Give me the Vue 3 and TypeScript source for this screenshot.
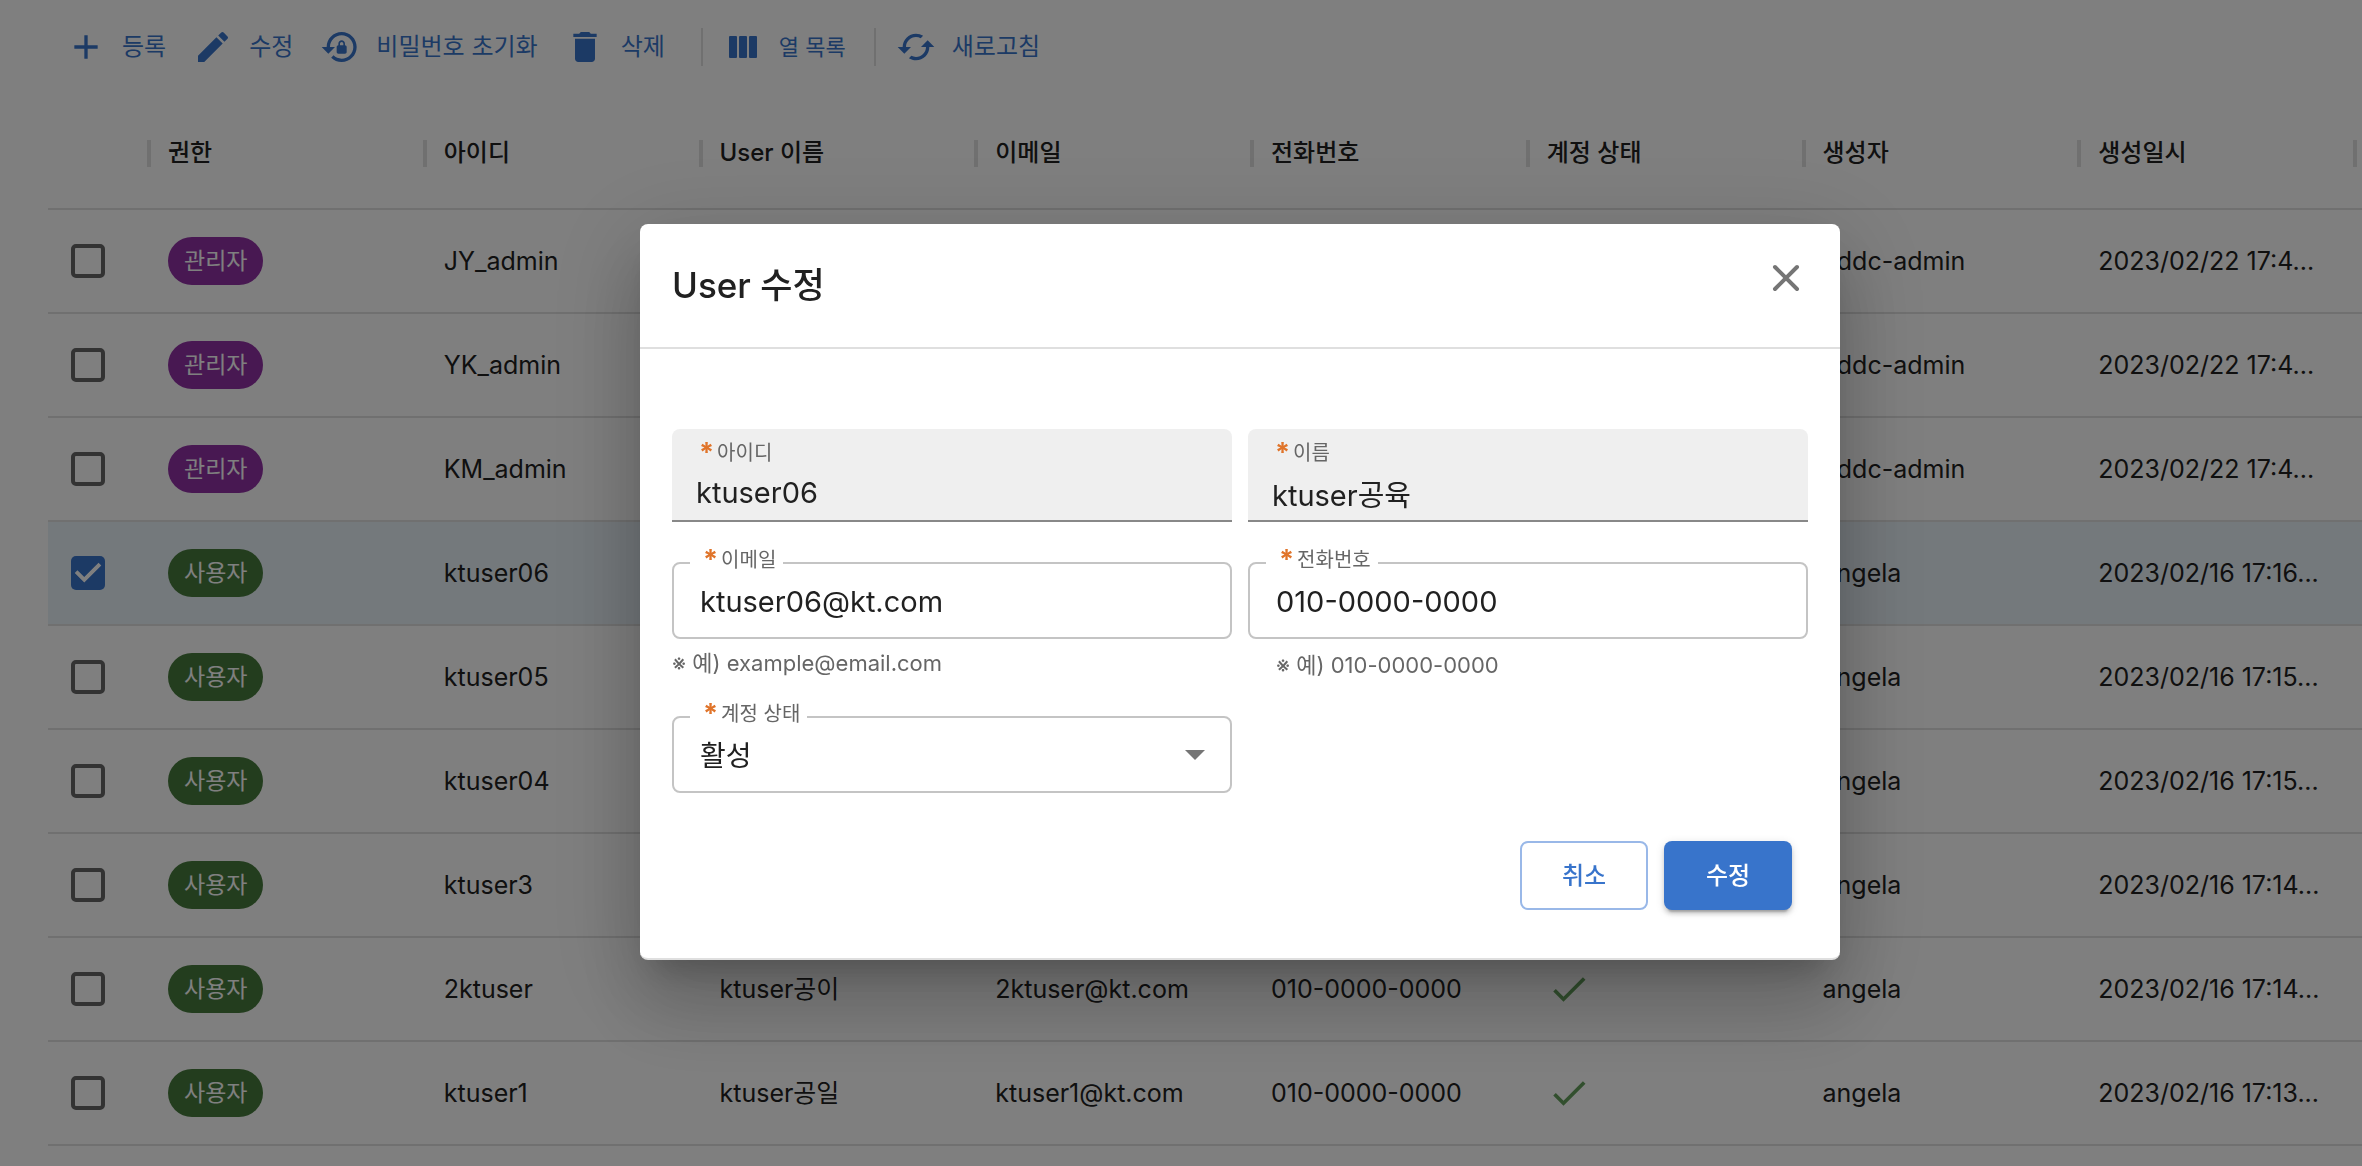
<script setup lang="ts">
import { reactive, ref } from 'vue'

interface UserRow {
  id: string
  admin: boolean
  name: string
  email: string
  phone: string
  active: boolean
  creator: string
  created: string
}

const headers = ['권한', '아이디', 'User 이름', '이메일', '전화번호', '계정 상태', '생성자', '생성일시']

const row = (
  id: string,
  admin: boolean,
  creator: string,
  created: string,
  name = '',
  email = '',
  phone = '',
): UserRow => ({ id, admin, name, email, phone, active: phone !== '', creator, created })

const rows: UserRow[] = [
  row('JY_admin', true, 'cddc-admin', '2023/02/22 17:4...'),
  row('YK_admin', true, 'cddc-admin', '2023/02/22 17:4...'),
  row('KM_admin', true, 'cddc-admin', '2023/02/22 17:4...'),
  row('ktuser06', false, 'angela', '2023/02/16 17:16...'),
  row('ktuser05', false, 'angela', '2023/02/16 17:15...'),
  row('ktuser04', false, 'angela', '2023/02/16 17:15...'),
  row('ktuser3', false, 'angela', '2023/02/16 17:14...'),
  row('2ktuser', false, 'angela', '2023/02/16 17:14...', 'ktuser공이', '2ktuser@kt.com', '010-0000-0000'),
  row('ktuser1', false, 'angela', '2023/02/16 17:13...', 'ktuser공일', 'ktuser1@kt.com', '010-0000-0000'),
]

const selected = ref<string[]>(['ktuser06'])
const form = reactive({
  id: 'ktuser06',
  name: 'ktuser공육',
  email: 'ktuser06@kt.com',
  phone: '010-0000-0000',
  status: '활성',
})
</script>

<template>
  <div class="page">
    <div class="toolbar">
      <div class="group">
        <button type="button" class="tool">
          <svg viewBox="0 0 24 24"><path d="M19 13h-6v6h-2v-6H5v-2h6V5h2v6h6v2z" /></svg>등록
        </button>
        <button type="button" class="tool">
          <svg viewBox="0 0 24 24"><path d="M3 17.25V21h3.75L17.81 9.94l-3.75-3.75L3 17.25zM20.71 7.04c.39-.39.39-1.02 0-1.41l-2.34-2.34a.9959.9959 0 0 0-1.41 0l-1.83 1.83 3.75 3.75 1.83-1.83z" /></svg>수정
        </button>
        <button type="button" class="tool">
          <svg viewBox="0 0 24 24"><path d="M13 3c-4.97 0-9 4.03-9 9H1l4 4 4-4H6c0-3.86 3.14-7 7-7s7 3.14 7 7-3.14 7-7 7c-1.9 0-3.62-.76-4.88-1.99L6.7 18.42C8.32 20.01 10.55 21 13 21c4.97 0 9-4.03 9-9s-4.03-9-9-9zm2 8v-1c0-1.1-.9-2-2-2s-2 .9-2 2v1c-.55 0-1 .45-1 1v3c0 .55.45 1 1 1h4c.55 0 1-.45 1-1v-3c0-.55-.45-1-1-1zm-1 0h-2v-1c0-.55.45-1 1-1s1 .45 1 1v1z" /></svg>비밀번호 초기화
        </button>
        <button type="button" class="tool">
          <svg viewBox="0 0 24 24"><path d="M6 19c0 1.1.9 2 2 2h8c1.1 0 2-.9 2-2V7H6v12zM19 4h-3.5l-1-1h-5l-1 1H5v2h14V4z" /></svg>삭제
        </button>
      </div>
      <div class="group">
        <button type="button" class="tool small">
          <svg viewBox="0 0 40 40">
            <rect x="6" y="9" width="8" height="22" rx="1" />
            <rect x="16" y="9" width="8" height="22" rx="1" />
            <rect x="26" y="9" width="8" height="22" rx="1" />
          </svg>열 목록
        </button>
      </div>
      <div class="group">
        <button type="button" class="tool">
          <svg viewBox="0 0 24 24"><path d="M19 8l-4 4h3c0 3.31-2.69 6-6 6-1.01 0-1.97-.25-2.8-.7l-1.46 1.46C8.97 19.54 10.43 20 12 20c4.42 0 8-3.58 8-8h3l-4-4zM6 12c0-3.31 2.69-6 6-6 1.01 0 1.97.25 2.8.7l1.46-1.46C15.03 4.46 13.57 4 12 4c-4.42 0-8 3.58-8 8H1l4 4 4-4H6z" /></svg>새로고침
        </button>
      </div>
    </div>

    <table class="grid">
      <colgroup>
        <col class="col-check" />
        <col v-for="h in headers" :key="h" />
        <col class="col-end" />
      </colgroup>
      <thead>
        <tr>
          <th scope="col" aria-label="선택"></th>
          <th v-for="h in headers" :key="h" scope="col">{{ h }}</th>
          <th class="end"></th>
        </tr>
      </thead>
      <tbody>
        <tr v-for="r in rows" :key="r.id" :class="{ selected: selected.includes(r.id) }">
          <td>
            <input v-model="selected" type="checkbox" class="check" :value="r.id" :aria-label="r.id" />
          </td>
          <td><span class="chip" :class="{ admin: r.admin }">{{ r.admin ? '관리자' : '사용자' }}</span></td>
          <td>{{ r.id }}</td>
          <td>{{ r.name }}</td>
          <td>{{ r.email }}</td>
          <td>{{ r.phone }}</td>
          <td class="status">
            <svg v-if="r.active" viewBox="0 0 24 24"><path d="M9 16.17 4.83 12l-1.42 1.41L9 19 21 7l-1.41-1.41z" /></svg>
          </td>
          <td>{{ r.creator }}</td>
          <td>{{ r.created }}</td>
          <td></td>
        </tr>
      </tbody>
    </table>

    <div class="backdrop">
      <div class="dialog" role="dialog" aria-modal="true" aria-labelledby="dialog-title">
        <header class="head">
          <h2 id="dialog-title">User 수정</h2>
          <button type="button" class="close" aria-label="닫기">
            <svg viewBox="0 0 28 28"><path d="M3 3l22 22M25 3L3 25" /></svg>
          </button>
        </header>
        <form class="form" @submit.prevent>
          <div class="fields">
            <div class="filled">
              <label for="f-id"><span class="req">*</span>아이디</label>
              <input id="f-id" v-model="form.id" type="text" readonly />
            </div>
            <div class="filled">
              <label for="f-name"><span class="req">*</span>이름</label>
              <input id="f-name" v-model="form.name" type="text" readonly />
            </div>
            <div class="field">
              <div class="outlined">
                <label for="f-email"><span class="req">*</span>이메일</label>
                <input id="f-email" v-model="form.email" type="email" />
              </div>
              <p class="helper">※ 예) example@email.com</p>
            </div>
            <div class="field">
              <div class="outlined">
                <label for="f-phone"><span class="req">*</span>전화번호</label>
                <input id="f-phone" v-model="form.phone" type="tel" />
              </div>
              <p class="helper indent">※ 예) 010-0000-0000</p>
            </div>
            <div class="outlined">
              <label for="f-status"><span class="req">*</span>계정 상태</label>
              <select id="f-status" v-model="form.status">
                <option>활성</option>
                <option>비활성</option>
              </select>
              <svg class="arrow" viewBox="0 0 20 10"><path d="M0 0h20L10 10z" /></svg>
            </div>
          </div>
          <div class="actions">
            <button type="button" class="btn">취소</button>
            <button type="submit" class="btn primary">수정</button>
          </div>
        </form>
      </div>
    </div>
  </div>
</template>

<style>
body {
  margin: 0;
  background: #fff;
}
</style>

<style scoped>
.page {
  --blue: #3874cb;
  box-sizing: border-box;
  min-height: 100vh;
  padding: 28px 0 0 48px;
  overflow: hidden;
  font-family: Inter, 'Noto Sans CJK KR', sans-serif;
  font-size: 25px;
  line-height: 36px;
  color: #212121;
}

button,
input,
select {
  font-family: inherit;
  line-height: inherit;
  color: inherit;
  margin: 0;
}

.toolbar {
  display: flex;
  padding-left: 18px;
}

.group {
  display: flex;
  align-items: center;
  gap: 27px;
  height: 38px;
  padding: 0 28px 0 20px;
}

.group:first-child {
  padding: 0 36px 0 0;
}

.group + .group {
  border-left: 2px solid #e0e0e0;
}

.tool {
  display: flex;
  align-items: center;
  gap: 16px;
  padding: 0;
  border: 0;
  background: none;
  color: var(--blue);
  font-size: 24px;
  white-space: nowrap;
}

.tool.small {
  font-size: 22px;
}

.tool svg {
  width: 40px;
  height: 40px;
  fill: currentColor;
}

.grid {
  width: 100%;
  margin-top: 32px;
  border-collapse: separate;
  border-spacing: 0;
  table-layout: fixed;
}

.col-check {
  width: 100px;
}

.col-end {
  width: 8px;
}

th,
td {
  box-sizing: border-box;
  padding: 0 0 0 20px;
  border-bottom: 2px solid #e0e0e0;
  text-align: left;
  white-space: nowrap;
}

th {
  position: relative;
  height: 112px;
  font-size: 24px;
  font-weight: 500;
}

th:not(.end)::after {
  content: '';
  position: absolute;
  top: 42px;
  right: -3px;
  width: 4px;
  height: 27px;
  background: #e0e0e0;
}

td {
  height: 104px;
}

.selected td {
  background: #e9f2f9;
}

th:last-child,
td:last-child {
  padding: 0;
}

.check {
  appearance: none;
  display: block;
  box-sizing: border-box;
  width: 34px;
  height: 34px;
  margin-left: 3px;
  border: 4px solid #666;
  border-radius: 5px;
}

.check:checked {
  border: 0;
  background: var(--blue);
}

.check:checked::after {
  content: '';
  display: block;
  height: 100%;
  background: #fff;
  clip-path: polygon(39% 78%, 11% 50%, 19% 42%, 39% 62%, 81% 20%, 89% 28%);
}

.chip {
  display: inline-flex;
  align-items: center;
  height: 48px;
  padding: 0 16px;
  border-radius: 24px;
  background: #467a3c;
  color: #fff;
  font-size: 23px;
  vertical-align: middle;
}

.chip.admin {
  background: #9030a4;
}

.status svg {
  display: block;
  width: 44px;
  height: 44px;
  fill: #649f5c;
}

.backdrop {
  position: fixed;
  inset: 0;
  box-sizing: border-box;
  display: flex;
  align-items: center;
  justify-content: center;
  padding: 18px 0 0 118px;
  background: rgba(0, 0, 0, 0.5);
}

.dialog {
  box-sizing: border-box;
  width: 100%;
  max-width: 1200px;
  border-bottom: 2px solid #dfdfdf;
  border-radius: 8px;
  background: #fff;
  box-shadow:
    0 22px 30px -14px rgba(0, 0, 0, 0.2),
    0 48px 76px 6px rgba(0, 0, 0, 0.14),
    0 18px 92px 16px rgba(0, 0, 0, 0.12);
}

.head {
  display: flex;
  justify-content: space-between;
  padding: 32px 40px 32px 32px;
  border-bottom: 2px solid #dfdfdf;
}

.head h2 {
  margin: 0;
  font-size: 35px;
  font-weight: 500;
  line-height: 59px;
}

.close {
  align-self: flex-start;
  display: flex;
  margin-top: 8px;
  padding: 0;
  border: 0;
  background: none;
}

.close svg {
  width: 28px;
  height: 28px;
  fill: none;
  stroke: #757575;
  stroke-width: 4;
  stroke-linecap: round;
}

.form {
  padding: 80px 32px 48px;
}

.fields {
  display: grid;
  grid-template-columns: 1fr 1fr;
  gap: 40px 16px;
}

.filled {
  padding-top: 12px;
  border-bottom: 2px solid #888;
  border-radius: 8px 8px 0 0;
  background: #efefef;
}

label {
  display: flex;
  align-items: center;
  gap: 3px;
  height: 24px;
  color: #666;
  font-size: 20px;
  line-height: 24px;
  white-space: nowrap;
}

.filled label {
  padding-left: 27px;
}

.req {
  color: #e0742a;
  font-size: 27px;
  font-weight: 700;
}

input:not(.check),
select {
  display: block;
  box-sizing: border-box;
  width: 100%;
  border: 0;
  background: none;
  outline: 0;
  font-size: 29px;
}

.filled input {
  height: 55px;
  padding: 0 24px;
}

.field {
  height: 114px;
}

.outlined {
  position: relative;
  box-sizing: border-box;
  height: 77px;
  border: 2px solid #c4c4c4;
  border-radius: 8px;
}

.outlined label {
  position: absolute;
  top: -16px;
  left: 16px;
  padding: 0 7px 0 13px;
  background: #fff;
}

.outlined input,
.outlined select {
  appearance: none;
  height: 73px;
  padding: 2px 26px 0;
}

.outlined select {
  font-size: 28px;
}

.arrow {
  position: absolute;
  top: 32px;
  right: 25px;
  width: 20px;
  height: 10px;
  fill: #757575;
  pointer-events: none;
}

.helper {
  margin: 9px 0 0;
  color: #666;
  font-size: 22px;
  line-height: 30px;
}

.helper.indent {
  margin: 11px 0 0 28px;
}

.actions {
  display: flex;
  justify-content: flex-end;
  gap: 16px;
  margin-top: 48px;
  padding-right: 16px;
}

.btn {
  box-sizing: border-box;
  width: 128px;
  height: 69px;
  border: 2px solid #99b8e8;
  border-radius: 8px;
  background: #fff;
  color: var(--blue);
  font-size: 24px;
  font-weight: 500;
}

.btn.primary {
  border: 0;
  background: var(--blue);
  color: #fff;
  box-shadow:
    0 6px 2px -4px rgba(0, 0, 0, 0.2),
    0 4px 4px rgba(0, 0, 0, 0.14),
    0 2px 10px rgba(0, 0, 0, 0.12);
}
</style>
